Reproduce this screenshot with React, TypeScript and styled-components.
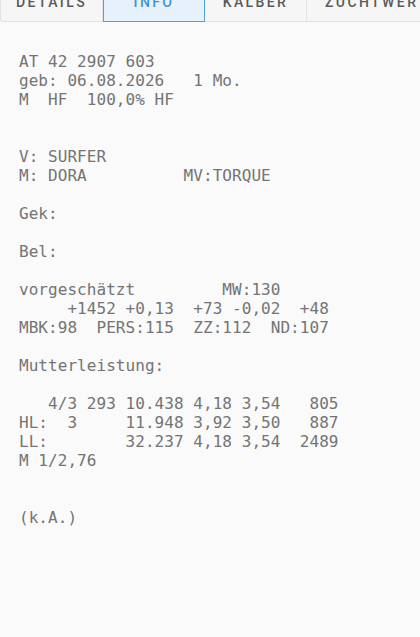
import React from "react";
import styled, { createGlobalStyle } from "styled-components";

const Global = createGlobalStyle`
  html, body { margin: 0; padding: 0; background: #fafafa; }
  body { overflow: hidden; width: 420px; height: 637px; }
`;

const Page = styled.div`
  width: 420px;
  height: 637px;
  overflow: hidden;
  background: #fafafa;
`;

const TabBar = styled.div`
  display: flex;
  margin-top: -18px;
  height: 40px;
  width: 520px;
  background: #f6f6f6;
  border: 1px solid #e2e2e2;
  border-top: none;
  border-radius: 0 0 0 4px;
  box-sizing: border-box;
`;

const Tab = styled.div<{ $active?: boolean; $wide?: boolean }>`
  flex: 0 0 ${(p) => (p.$wide ? "200px" : "102px")};
  box-sizing: border-box;
  display: flex;
  align-items: center;
  justify-content: ${(p) => (p.$wide ? "flex-start" : "center")};
  padding-left: ${(p) => (p.$wide ? "18px" : "0")};
  font-family: Roboto, "Liberation Sans", sans-serif;
  font-weight: 500;
  font-size: 14px;
  letter-spacing: 2.4px;
  color: ${(p) => (p.$active ? "#3d93dc" : "#5a5a5a")};
  background: ${(p) => (p.$active ? "#e7f1fb" : "transparent")};
  border: ${(p) => (p.$active ? "1px solid #4da3e0" : "none")};
  border-top: none;
  border-right: ${(p) => (p.$active ? "1px solid #4da3e0" : "1px solid #e4e4e4")};
  margin-bottom: ${(p) => (p.$active ? "-1px" : "0")};
`;

const Content = styled.div`
  padding: 30px 0 0 19px;
`;

const Line = styled.div`
  font-family: "DejaVu Sans Mono", "Liberation Mono", monospace;
  font-size: 16px;
  letter-spacing: 0.05px;
  line-height: 19px;
  height: 19px;
  color: #747474;
  white-space: pre;
`;

const lines = [
  "AT 42 2907 603",
  "geb: 06.08.2026   1 Mo.",
  "M  HF  100,0% HF",
  "",
  "",
  "V: SURFER",
  "M: DORA          MV:TORQUE",
  "",
  "Gek:",
  "",
  "Bel:",
  "",
  "vorgeschätzt         MW:130",
  "     +1452 +0,13  +73 -0,02  +48",
  "MBK:98  PERS:115  ZZ:112  ND:107",
  "",
  "Mutterleistung:",
  "",
  "   4/3 293 10.438 4,18 3,54   805",
  "HL:  3     11.948 3,92 3,50   887",
  "LL:        32.237 4,18 3,54  2489",
  "M 1/2,76",
  "",
  "",
  "(k.A.)",
];

export default function App() {
  return (
    <Page>
      <Global />
      <TabBar>
        <Tab>DETAILS</Tab>
        <Tab $active>INFO</Tab>
        <Tab>KÄLBER</Tab>
        <Tab $wide>ZUCHTWERTE</Tab>
      </TabBar>
      <Content>
        {lines.map((l, i) => (
          <Line key={i}>{l}</Line>
        ))}
      </Content>
    </Page>
  );
}
